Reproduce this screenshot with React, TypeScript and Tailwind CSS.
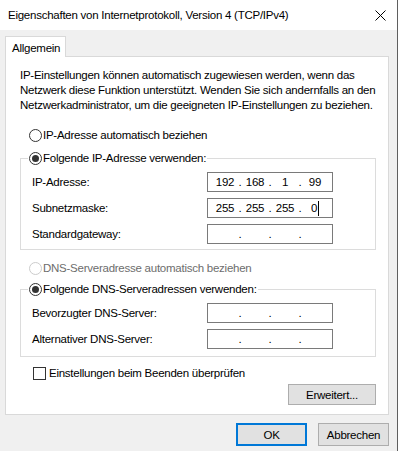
import { Fragment } from "react";

function Radio({ checked, disabled }: { checked?: boolean; disabled?: boolean }) {
  return (
    <span
      className={`flex h-[13px] w-[13px] shrink-0 items-center justify-center rounded-full border bg-white ${
        disabled ? "border-[#cccccc]" : "border-[#333333]"
      }`}
    >
      {checked && <span className="h-[7px] w-[7px] rounded-full bg-[#333333]" />}
    </span>
  );
}

function IpField({ parts, caret }: { parts: string[]; caret?: boolean }) {
  return (
    <div className="flex h-[20px] w-[126px] items-center border border-[#7a7a7a] bg-white pl-[4px]">
      {parts.map((p, i) => (
        <Fragment key={i}>
          <span className="flex w-[26px] items-center justify-center">
            {p}
            {caret && i === 3 && <span className="ml-px inline-block h-[15px] w-px bg-black" />}
          </span>
          {i < 3 && <span className="w-[4px] text-center">.</span>}
        </Fragment>
      ))}
    </div>
  );
}

const empty = ["", "", "", ""];

function Row({ label, parts, caret }: { label: string; parts: string[]; caret?: boolean }) {
  return (
    <div className="flex h-[20px] items-center">
      <span className="w-[175px]">{label}</span>
      <IpField parts={parts} caret={caret} />
    </div>
  );
}

export default function App() {
  return (
    <div className="flex h-[451px] w-[398px] flex-col overflow-hidden whitespace-nowrap border-r border-[#5f5f5f] bg-[#f0f0f0] font-['Liberation_Sans',Arial,sans-serif] text-[11.5px] leading-[16px] tracking-[-0.25px] text-black">
      {/* title bar */}
      <div className="flex h-[30px] shrink-0 items-center justify-between bg-white pl-[8px] pr-[11px]">
        <span>Eigenschaften von Internetprotokoll, Version 4 (TCP/IPv4)</span>
        <svg width="11" height="11" viewBox="0 0 11 11" className="mt-px">
          <path d="M0.5 0.5 L10.5 10.5 M10.5 0.5 L0.5 10.5" stroke="#000" strokeWidth="1" />
        </svg>
      </div>

      <div className="pl-[5px] pt-[6px]">
        <div className="flex">
          <div className="relative z-10 -mb-px h-[21px] w-[61px] border border-b-0 border-[#d9d9d9] bg-white pl-[6px] pt-[3px]">
            Allgemein
          </div>
        </div>

        <div className="flex w-[384px] flex-col border border-[#d9d9d9] bg-white pb-[9px] pl-[14px] pr-[12px] pt-[11px]">
          <p className="leading-[15px]">
            IP-Einstellungen können automatisch zugewiesen werden, wenn das
            <br />
            Netzwerk diese Funktion unterstützt. Wenden Sie sich andernfalls an den
            <br />
            Netzwerkadministrator, um die geeigneten IP-Einstellungen zu beziehen.
          </p>

          <div className="mt-[14px] flex h-[16px] items-center gap-[1px] pl-[9px]">
            <Radio />
            <span>IP-Adresse automatisch beziehen</span>
          </div>

          <fieldset className="mt-[5px] border border-[#dcdcdc] pb-[5px] pl-[11px] pt-[4px]">
            <legend className="-ml-[4px] px-px">
              <span className="flex h-[20px] items-center gap-[1px]">
                <Radio checked />
                <span>Folgende IP-Adresse verwenden:</span>
              </span>
            </legend>
            <div className="flex flex-col gap-[6px]">
              <Row label="IP-Adresse:" parts={["192", "168", "1", "99"]} />
              <Row label="Subnetzmaske:" parts={["255", "255", "255", "0"]} caret />
              <Row label="Standardgateway:" parts={empty} />
            </div>
          </fieldset>

          <div className="mt-[10px] flex h-[16px] items-center gap-[1px] pl-[9px] text-[#6d6d6d]">
            <Radio disabled />
            <span>DNS-Serveradresse automatisch beziehen</span>
          </div>

          <fieldset className="mt-[3px] border border-[#dcdcdc] pb-[7px] pl-[11px] pt-[4px]">
            <legend className="-ml-[4px] px-px">
              <span className="flex h-[20px] items-center gap-[1px]">
                <Radio checked />
                <span>Folgende DNS-Serveradressen verwenden:</span>
              </span>
            </legend>
            <div className="flex flex-col gap-[6px]">
              <Row label="Bevorzugter DNS-Server:" parts={empty} />
              <Row label="Alternativer DNS-Server:" parts={empty} />
            </div>
          </fieldset>

          <div className="mt-[8px] flex h-[16px] items-center gap-[3px] pl-[13px]">
            <span className="h-[13px] w-[13px] border border-[#333333] bg-white" />
            <span>Einstellungen beim Beenden überprüfen</span>
          </div>

          <button className="mt-[3px] flex h-[21px] w-[88px] items-center justify-center self-end border border-[#adadad] bg-[#e1e1e1]">
            Erweitert...
          </button>
        </div>

        <div className="mt-[8px] flex w-[384px] justify-end gap-[11px]">
          <button className="flex h-[23px] w-[71px] items-center justify-center border-2 border-[#0078d7] bg-[#e1e1e1]">
            OK
          </button>
          <button className="flex h-[23px] w-[71px] items-center justify-center border border-[#adadad] bg-[#e1e1e1]">
            Abbrechen
          </button>
        </div>
      </div>
    </div>
  );
}
